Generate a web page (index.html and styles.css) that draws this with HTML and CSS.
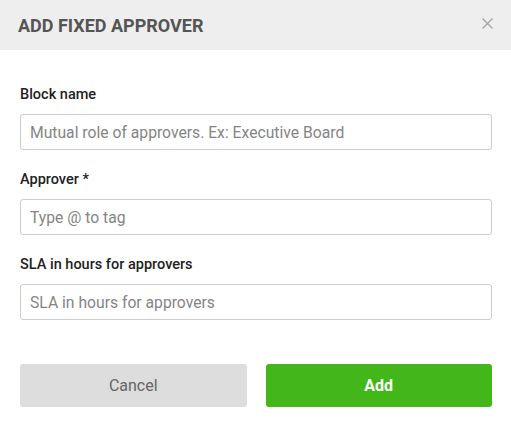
FILE: index.html
```html
<!DOCTYPE html>
<html>
<head>
<meta charset="utf-8">
<link rel="stylesheet" href="styles.css">
</head>
<body>
<div class="modal">
  <div class="modal-header">
    <h1 class="modal-title">ADD FIXED APPROVER</h1>
    <button class="close" aria-label="Close">
      <svg width="11" height="11" viewBox="0 0 11 11"><path d="M0.5 0.5L10.5 10.5M10.5 0.5L0.5 10.5" stroke="#a9a9a9" stroke-width="1.5" fill="none"/></svg>
    </button>
  </div>
  <div class="modal-body">
    <div class="field">
      <label class="label">Block name</label>
      <input class="input" type="text" placeholder="Mutual role of approvers. Ex: Executive Board">
    </div>
    <div class="field">
      <label class="label">Approver *</label>
      <input class="input" type="text" placeholder="Type @ to tag">
    </div>
    <div class="field">
      <label class="label">SLA in hours for approvers</label>
      <input class="input" type="text" placeholder="SLA in hours for approvers">
    </div>
    <div class="actions">
      <button class="btn btn-cancel">Cancel</button>
      <button class="btn btn-add">Add</button>
    </div>
  </div>
</div>
</body>
</html>
```
FILE: styles.css
```css
* { box-sizing: border-box; }
html, body { margin: 0; padding: 0; background: #fff; }
body { font-family: Roboto, "Liberation Sans", sans-serif; }
.modal { width: 511px; }
.modal-header {
  height: 50px;
  background: #eeeeee;
  display: flex;
  align-items: center;
  justify-content: space-between;
  padding: 0 18px 0 18px;
}
.modal-title {
  margin: 0;
  font-size: 18px;
  font-weight: 700;
  color: #555555;
  letter-spacing: 0;
}
.close {
  border: 0;
  background: none;
  padding: 0;
  width: 11px;
  height: 11px;
  display: flex;
  margin-top: -3px;
}
.modal-body { padding: 35px 19px 0 20px; }
.field { display: flex; flex-direction: column; margin-bottom: 20px; }
.label {
  font-size: 14.5px;
  font-weight: 500;
  color: #222;
  line-height: 20px;
  margin-bottom: 9px;
}
.input {
  height: 36px;
  border: 1px solid #cccccc;
  border-radius: 3px;
  padding: 0 9px;
  font-family: Roboto, "Liberation Sans", sans-serif;
  font-size: 15.7px;
  color: #333;
  outline: none;
}
.input::placeholder { color: #858585; }
.actions {
  display: flex;
  gap: 19px;
  margin-top: 44px;
}
.btn {
  flex: 1;
  height: 43px;
  border: 0;
  border-radius: 3px;
  font-family: Roboto, "Liberation Sans", sans-serif;
  font-size: 16px;
}
.btn-cancel { background: #dddddd; color: #666666; }
.btn-add { background: #43b619; color: #fff; font-weight: 700; }
```
